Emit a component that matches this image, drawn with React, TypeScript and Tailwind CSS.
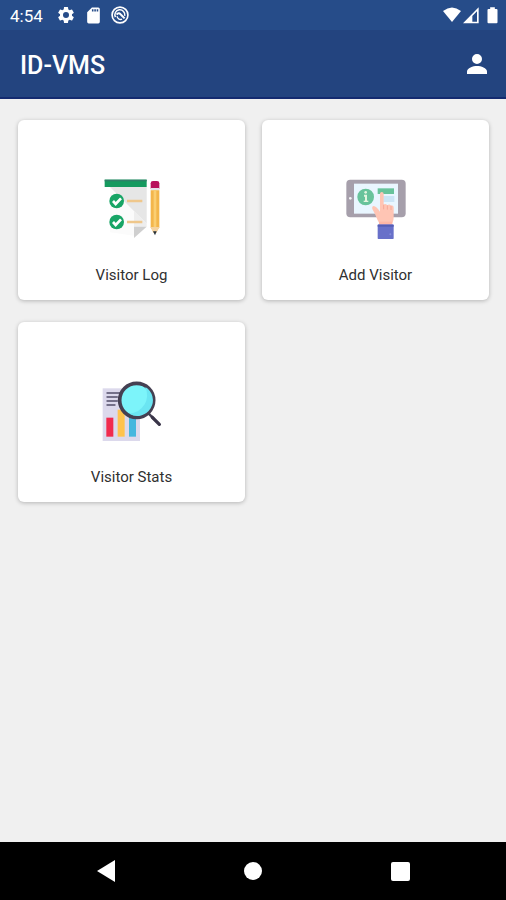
import type { ReactNode } from "react";

type MenuCardProps = {
  label: string;
  icon: ReactNode;
};

function VisitorLogIcon() {
  return (
    <svg viewBox="0 0 180 180" className="size-[60px]" aria-hidden="true">
      <path d="M24 24H134V143H96V170L24 160Z" fill="#fbfbfb" />
      <path d="M24 24H134V134Z" fill="#e6e6e6" />
      <path d="M96 96L134 134V143H96Z" fill="#eeeeee" />
      <path d="M96 143H134L96 177Z" fill="#cfcfcf" />
      <rect x="8" y="2" width="126" height="22" fill="#159a5f" />
      <rect x="8" y="2" width="126" height="5" fill="#2f8068" />
      <circle cx="44" cy="66" r="22" fill="#18a566" />
      <circle cx="44" cy="129" r="22" fill="#18a566" />
      <path d="M33 66L41 75L57 58M33 129L41 138L57 121" fill="none" stroke="#fff" strokeWidth="8" />
      <path d="M75 66H121M75 129H121" stroke="#efc78b" strokeWidth="7" />
      <path d="M146 30V13Q146 6 153 6H165Q172 6 172 13V30Z" fill="#b8105c" />
      <rect x="146" y="27" width="26" height="7" fill="#e4e1e8" />
      <path d="M146 34H172V145L162 161H155L146 145Z" fill="#f3b64c" />
      <path d="M155 34H163V145H155Z" fill="#fbcf73" />
      <path d="M146 144H172L163 162H154Z" fill="#f5d3a1" />
      <path d="M153 157H164L159 169Z" fill="#27323a" />
    </svg>
  );
}

function AddVisitorIcon() {
  return (
    <svg viewBox="0 0 180 180" className="size-[60px]" aria-hidden="true">
      <rect x="1" y="2" width="178" height="113" rx="12" fill="#a69fab" />
      <rect x="24" y="14" width="132" height="90" fill="#e9f6ff" />
      <circle cx="13" cy="58" r="4" fill="#f4f4f6" />
      <circle cx="59" cy="54" r="25" fill="#68c39b" />
      <circle cx="59" cy="40" r="4" fill="#e4f5df" />
      <path d="M54 50H60V68" fill="none" stroke="#e4f5df" strokeWidth="6" />
      <path d="M53 67H67" stroke="#e4f5df" strokeWidth="4" />
      <rect x="95" y="28" width="49" height="17" fill="#68c39b" />
      <rect x="112" y="51" width="33" height="18" fill="#cce5f6" />
      <path
        d="M102 92V45Q102 39 107 39Q113 39 113 45V77Q118 72 124 79Q130 73 135 80Q143 77 143 86V114Q143 130 133 139H103Q94 123 87 105L79 90Q77 82 83 81Q91 82 102 98Z"
        fill="#ffc5b4"
      />
      <path d="M113 77V91M124 79V92M135 80V93" stroke="#f5a999" strokeWidth="3" />
      <path d="M99 128H139V142H99Z" fill="#ffb7a6" />
      <rect x="95" y="136" width="48" height="44" rx="2" fill="#6870c9" />
      <path d="M95 138H143V143H95Z" fill="#555eb4" />
      <circle cx="133" cy="166" r="3" fill="#858cdb" />
    </svg>
  );
}

function VisitorStatsIcon() {
  return (
    <svg viewBox="0 0 180 180" className="size-[60px]" aria-hidden="true">
      <rect x="2" y="22" width="112" height="158" fill="#dcd9ec" />
      <path d="M15 36H58M15 48H46M15 60H46M15 72H39" stroke="#514d68" strokeWidth="4" strokeLinecap="round" />
      <rect x="13" y="110" width="21" height="57" fill="#f12b4e" />
      <rect x="47" y="86" width="21" height="81" fill="#ffc34d" />
      <rect x="81" y="98" width="21" height="69" fill="#45b7de" />
      <path d="M140 98L155 113" stroke="#454052" strokeWidth="7" />
      <path d="M151 109L172 130" stroke="#393448" strokeWidth="10" strokeLinecap="round" />
      <circle cx="104" cy="58" r="51" fill="#7cf4fa" stroke="#454052" strokeWidth="11" />
      <path d="M130 18A46 46 0 0 1 82 98A56 56 0 0 0 130 18Z" fill="#6be5f2" />
    </svg>
  );
}

function MenuCard({ label, icon }: MenuCardProps) {
  return (
    <button
      type="button"
      className="flex flex-col items-center rounded-md bg-white pt-[59px] pb-[15px] shadow-[0_1px_4px_rgba(0,0,0,0.25)]"
    >
      {icon}
      <span className="mt-[26px] text-[15px] leading-5 text-[#303030]">{label}</span>
    </button>
  );
}

function StatusBar() {
  return (
    <div className="flex h-[30px] items-center bg-[#264c89] pr-2 pl-[10px] text-white">
      <span className="w-[46px] pt-0.5 text-[17px] leading-5">4:54</span>
      <svg viewBox="0 0 24 24" className="size-5" fill="currentColor" aria-hidden="true">
        <path d="M19.14 12.94c.04-.3.06-.61.06-.94 0-.32-.02-.64-.07-.94l2.03-1.58a.49.49 0 0 0 .12-.61l-1.92-3.32a.49.49 0 0 0-.59-.22l-2.39.96c-.5-.38-1.03-.7-1.62-.94l-.36-2.54a.48.48 0 0 0-.48-.41h-3.84c-.24 0-.43.17-.47.41l-.36 2.54c-.59.24-1.13.57-1.62.94l-2.39-.96c-.22-.08-.47 0-.59.22L2.74 8.87c-.12.21-.08.47.12.61l2.03 1.58c-.05.3-.09.63-.09.94s.02.64.07.94l-2.03 1.58a.49.49 0 0 0-.12.61l1.92 3.32c.12.22.37.29.59.22l2.39-.96c.5.38 1.03.7 1.62.94l.36 2.54c.05.24.24.41.48.41h3.84c.24 0 .44-.17.47-.41l.36-2.54c.59-.24 1.13-.56 1.62-.94l2.39.96c.22.08.47 0 .59-.22l1.92-3.32a.49.49 0 0 0-.12-.61zM12 15.6a3.6 3.6 0 1 1 0-7.2 3.6 3.6 0 0 1 0 7.2z" />
      </svg>
      <svg viewBox="0 0 24 24" className="ml-2 size-[19px]" fill="currentColor" aria-hidden="true">
        <path d="M18 2h-8L4 8v12a2 2 0 0 0 2 2h12a2 2 0 0 0 2-2V4a2 2 0 0 0-2-2zm-6 5h-2V4h2v3zm3 0h-2V4h2v3zm3 0h-2V4h2v3z" />
      </svg>
      <svg viewBox="0 0 24 24" className="ml-[7px] size-5" fill="none" stroke="currentColor" aria-hidden="true">
        <circle cx="12" cy="12" r="9.5" strokeWidth="2" />
        <path d="M6.5 14.5A6 6 0 1 1 17.7 13" strokeWidth="1.8" />
        <path d="M8 11.5C10 8.5 12 10 13.5 12L17.5 16" strokeWidth="2.4" />
        <path d="M8.5 13.5C9 17 12 18 14.5 17" strokeWidth="1.8" />
      </svg>
      <svg viewBox="0 0 54 54" className="ml-auto size-[18px]" fill="currentColor" aria-hidden="true">
        <path d="M0 15Q27-6 54 15L27 48Z" />
      </svg>
      <svg viewBox="0 0 48 51" className="ml-0.5 h-[17px] w-4" fill="currentColor" aria-hidden="true">
        <path fillRule="evenodd" d="M47 1V49H0ZM42 13L28 27V44H42Z" />
      </svg>
      <svg viewBox="0 0 32 51" className="ml-2 h-[17px] w-[11px]" fill="currentColor" aria-hidden="true">
        <path d="M9 1H23V6H28Q31 6 31 9V46Q31 49 28 49H4Q1 49 1 46V9Q1 6 4 6H9Z" />
      </svg>
    </div>
  );
}

function NavigationBar() {
  return (
    <nav className="grid h-[58px] grid-cols-3 bg-black px-8 text-white">
      <button type="button" aria-label="Back" className="flex items-center justify-center">
        <svg viewBox="0 0 18 22" className="h-[22px] w-[18px]" fill="currentColor" aria-hidden="true">
          <path d="M0 11L18 0V22Z" />
        </svg>
      </button>
      <button type="button" aria-label="Home" className="flex items-center justify-center">
        <span className="size-[18px] rounded-full bg-white" />
      </button>
      <button type="button" aria-label="Recent apps" className="flex items-center justify-center">
        <span className="size-[19px] rounded-xs bg-white" />
      </button>
    </nav>
  );
}

export default function App() {
  return (
    <div className="flex min-h-screen flex-col bg-[#f0f0f0] font-[Roboto,sans-serif]">
      <StatusBar />
      <header className="flex h-[69px] items-center justify-between border-b-2 border-[#142b70] bg-[#23447f] pr-[17px] pl-5 text-white">
        <h1 className="pt-1 text-[25px] leading-8 font-medium">ID-VMS</h1>
        <button type="button" aria-label="Profile">
          <svg viewBox="0 0 24 24" className="size-6" fill="currentColor" aria-hidden="true">
            <path d="M12 12a5 5 0 1 0 0-10 5 5 0 0 0 0 10zm0 2c-4 0-10 2-10 5.5V22h20v-2.5C22 16 16 14 12 14z" />
          </svg>
        </button>
      </header>
      <main className="flex-1 pt-[21px] pr-[17px] pl-[18px]">
        <div className="grid grid-cols-2 gap-x-[17px] gap-y-[22px]">
          <MenuCard label="Visitor Log" icon={<VisitorLogIcon />} />
          <MenuCard label="Add Visitor" icon={<AddVisitorIcon />} />
          <MenuCard label="Visitor Stats" icon={<VisitorStatsIcon />} />
        </div>
      </main>
      <NavigationBar />
    </div>
  );
}
